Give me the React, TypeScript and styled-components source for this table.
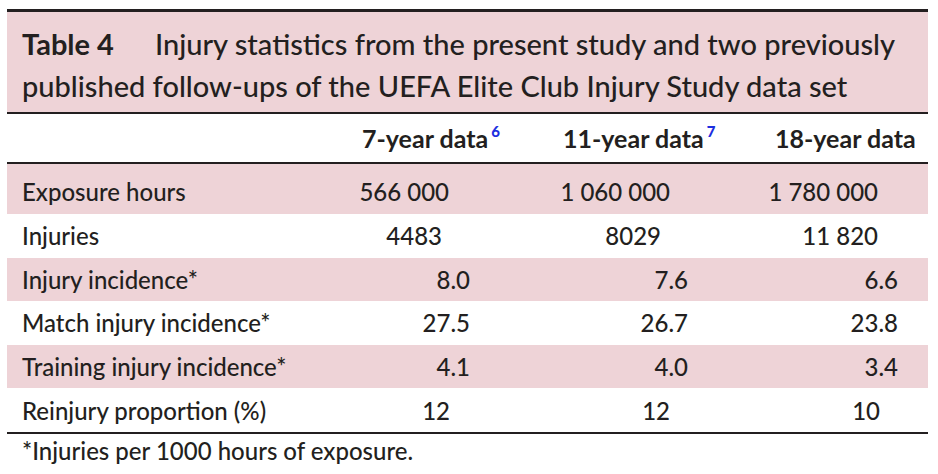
import React from 'react';
import styled, { createGlobalStyle } from 'styled-components';

const GlobalStyle = createGlobalStyle`
  body {
    margin: 0;
    background: #ffffff;
    font-family: Lato, "Open Sans", "Liberation Sans", sans-serif;
    font-weight: 500;
    color: #231f20;
  }
`;

const PINK = '#eed3d7';
const INK = '#231f20';

const Page = styled.div`
  padding: 9px 10px 0 7px;
`;

const Table = styled.div`
  width: 921px;
`;

const TitleBand = styled.div`
  background: ${PINK};
  border-top: 3px solid ${INK};
  border-bottom: 2px solid ${INK};
  padding: 11px 15px 6px;
  font-size: 29px;
  line-height: 41.5px;
`;

const TableNo = styled.span`
  font-weight: 700;
  margin-right: 41px;
`;

const Grid = styled.div<{ shaded?: boolean; first?: boolean }>`
  display: grid;
  grid-template-columns: 333px 210px 210px 1fr;
  align-items: center;
  height: ${p => (p.first ? '50px' : '43.6px')};
  padding-top: ${p => (p.first ? '5px' : '0')};
  box-sizing: border-box;
  background: ${p => (p.shaded ? PINK : 'transparent')};
  font-size: 24px;
  font-variant-numeric: tabular-nums;
`;

const HeaderRow = styled(Grid)`
  height: 50px;
  border-bottom: 2px solid ${INK};
  font-weight: 700;
  font-size: 25px;
`;

const Label = styled.div`
  padding-left: 15px;
  white-space: nowrap;
`;

const HeadCell = styled.div<{ indent: number }>`
  padding-left: ${p => p.indent}px;
  white-space: nowrap;
`;

const Ref = styled.sup`
  color: #1d2fe0;
  font-size: 15px;
  font-weight: 900;
  vertical-align: 11px;
  line-height: 0;
  margin-left: 3px;
`;

const Value = styled.div<{ inset: number }>`
  text-align: right;
  padding-right: ${p => p.inset}px;
  white-space: nowrap;
`;

const BottomRule = styled.div`
  border-top: 2px solid ${INK};
`;

const Footnote = styled.div`
  padding: 2px 0 0 15px;
  font-size: 24px;
  line-height: 30px;
`;

type Cell = [string, number];

const rows: { label: string; cells: Cell[] }[] = [
  { label: 'Exposure hours', cells: [['566 000', 101], ['1 060 000', 90], ['1 780 000', 50]] },
  { label: 'Injuries', cells: [['4483', 108], ['8029', 99], ['11 820', 50]] },
  { label: 'Injury incidence*', cells: [['8.0', 80], ['7.6', 72], ['6.6', 30]] },
  { label: 'Match injury incidence*', cells: [['27.5', 80], ['26.7', 72], ['23.8', 30]] },
  { label: 'Training injury incidence*', cells: [['4.1', 80], ['4.0', 72], ['3.4', 30]] },
  { label: 'Reinjury proportion (%)', cells: [['12', 100], ['12', 90], ['10', 48]] },
];

export default function App() {
  return (
    <Page>
      <GlobalStyle />
      <Table>
        <TitleBand>
          <TableNo>Table 4</TableNo>
          Injury statistics from the present study and two previously published
          follow-ups of the UEFA Elite Club Injury Study data set
        </TitleBand>
        <HeaderRow>
          <Label />
          <HeadCell indent={22}>7-year data<Ref>6</Ref></HeadCell>
          <HeadCell indent={13}>11-year data<Ref>7</Ref></HeadCell>
          <HeadCell indent={15}>18-year data</HeadCell>
        </HeaderRow>
        {rows.map((r, i) => (
          <Grid key={r.label} shaded={i % 2 === 0} first={i === 0}>
            <Label>{r.label}</Label>
            {r.cells.map(([text, inset], j) => (
              <Value key={j} inset={inset}>{text}</Value>
            ))}
          </Grid>
        ))}
        <BottomRule />
        <Footnote>*Injuries per 1000 hours of exposure.</Footnote>
      </Table>
    </Page>
  );
}
